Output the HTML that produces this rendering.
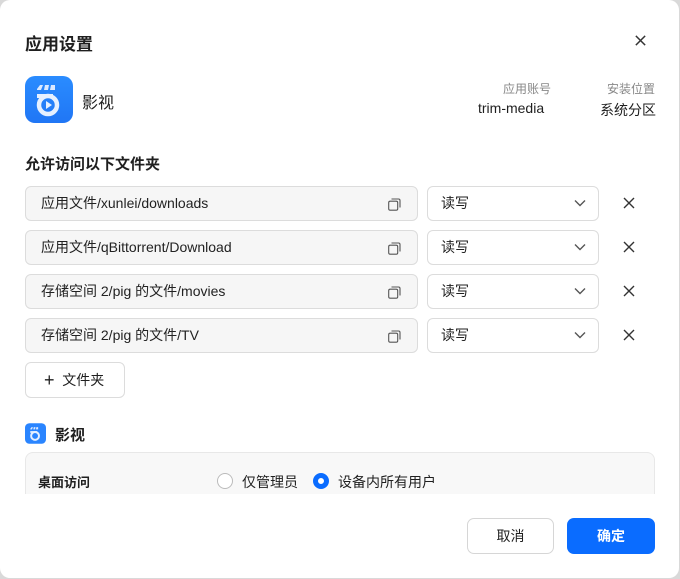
<!DOCTYPE html>
<html><head><meta charset="utf-8"><style>
*{box-sizing:border-box;margin:0;padding:0}
body{width:680px;height:579px;background:#d9d9d9;font-family:"Liberation Sans","Noto Sans CJK SC",sans-serif;color:#1f1f1f;position:relative;overflow:hidden}
.dlg{position:absolute;left:0;top:0;width:679px;height:578px;background:#fff;border-radius:10px}
.a{position:absolute}
.inp{position:absolute;left:25px;width:393px;height:35px;border:1px solid #dcdcdc;background:#f6f6f6;border-radius:6px;font-size:14px;padding-left:15px;line-height:33px;color:#222}
.sel{position:absolute;left:427px;width:172px;height:35px;border:1px solid #dcdcdc;background:#fff;border-radius:6px;font-size:14px;padding-left:13px;line-height:33px}
.cp{position:absolute;right:16px;top:11px}
.chev{position:absolute;right:12px;top:12px}
.x{position:absolute;left:623px}
</style></head><body><div class="dlg">
<div class="a" style="left:25px;top:30px;font-size:17px;font-weight:bold">应用设置</div>
<svg class="a" style="left:634px;top:34px" width="13" height="13" viewBox="0 0 14 14"><path d="M2 2L12 12M12 2L2 12" stroke="#333" stroke-width="1.6"/></svg>
<svg class="a" style="left:25px;top:76px" width="48" height="47" viewBox="0 0 48 47"><defs><linearGradient id="g" x1="0" y1="0" x2="0" y2="1"><stop offset="0" stop-color="#2a8cff"/><stop offset="1" stop-color="#2076f5"/></linearGradient></defs><rect width="48" height="47" rx="10" fill="url(#g)"/><path d="M12 13l3-4h3l-2 5h-4zM20 9h4l-1 5h-4zM26 9h4v5h-5z" fill="#dbe9ff"/><circle cx="23" cy="29" r="9" fill="none" stroke="#e6f0ff" stroke-width="4.5"/><path d="M12 18h16v4H12z" fill="#e6f0ff"/><path d="M21 25v8l6-4z" fill="#e6f0ff"/></svg>
<div class="a" style="left:82px;top:89px;font-size:16px">影视</div>
<div class="a" style="left:503px;top:80px;font-size:12px;color:#888">应用账号</div>
<div class="a" style="left:478px;top:100px;font-size:14px">trim-media</div>
<div class="a" style="left:607px;top:80px;font-size:12px;color:#888">安装位置</div>
<div class="a" style="left:600px;top:100px;font-size:14px">系统分区</div>
<div class="a" style="left:25px;top:153px;font-size:15px;font-weight:bold">允许访问以下文件夹</div>

<div class="inp" style="top:186px">应用文件/xunlei/downloads<svg class="cp" width="13" height="13" viewBox="0 0 13 13"><rect x="0.7" y="3.2" width="9" height="9" rx="1.5" fill="none" stroke="#555" stroke-width="1.1"/><path d="M3.5 1h7a1.5 1.5 0 0 1 1.5 1.5v7" fill="none" stroke="#555" stroke-width="1.1"/></svg></div>
<div class="sel" style="top:186px">读写<svg class="chev" width="12" height="8" viewBox="0 0 12 8"><path d="M1 1.5l5 5 5-5" fill="none" stroke="#555" stroke-width="1.4"/></svg></div>
<svg class="x" style="top:197px" width="12" height="12" viewBox="0 0 12 12"><path d="M1 1L11 11M11 1L1 11" stroke="#333" stroke-width="1.4"/></svg>

<div class="inp" style="top:230px">应用文件/qBittorrent/Download<svg class="cp" width="13" height="13" viewBox="0 0 13 13"><rect x="0.7" y="3.2" width="9" height="9" rx="1.5" fill="none" stroke="#555" stroke-width="1.1"/><path d="M3.5 1h7a1.5 1.5 0 0 1 1.5 1.5v7" fill="none" stroke="#555" stroke-width="1.1"/></svg></div>
<div class="sel" style="top:230px">读写<svg class="chev" width="12" height="8" viewBox="0 0 12 8"><path d="M1 1.5l5 5 5-5" fill="none" stroke="#555" stroke-width="1.4"/></svg></div>
<svg class="x" style="top:241px" width="12" height="12" viewBox="0 0 12 12"><path d="M1 1L11 11M11 1L1 11" stroke="#333" stroke-width="1.4"/></svg>

<div class="inp" style="top:274px">存储空间 2/pig 的文件/movies<svg class="cp" width="13" height="13" viewBox="0 0 13 13"><rect x="0.7" y="3.2" width="9" height="9" rx="1.5" fill="none" stroke="#555" stroke-width="1.1"/><path d="M3.5 1h7a1.5 1.5 0 0 1 1.5 1.5v7" fill="none" stroke="#555" stroke-width="1.1"/></svg></div>
<div class="sel" style="top:274px">读写<svg class="chev" width="12" height="8" viewBox="0 0 12 8"><path d="M1 1.5l5 5 5-5" fill="none" stroke="#555" stroke-width="1.4"/></svg></div>
<svg class="x" style="top:285px" width="12" height="12" viewBox="0 0 12 12"><path d="M1 1L11 11M11 1L1 11" stroke="#333" stroke-width="1.4"/></svg>

<div class="inp" style="top:318px">存储空间 2/pig 的文件/TV<svg class="cp" width="13" height="13" viewBox="0 0 13 13"><rect x="0.7" y="3.2" width="9" height="9" rx="1.5" fill="none" stroke="#555" stroke-width="1.1"/><path d="M3.5 1h7a1.5 1.5 0 0 1 1.5 1.5v7" fill="none" stroke="#555" stroke-width="1.1"/></svg></div>
<div class="sel" style="top:318px">读写<svg class="chev" width="12" height="8" viewBox="0 0 12 8"><path d="M1 1.5l5 5 5-5" fill="none" stroke="#555" stroke-width="1.4"/></svg></div>
<svg class="x" style="top:329px" width="12" height="12" viewBox="0 0 12 12"><path d="M1 1L11 11M11 1L1 11" stroke="#333" stroke-width="1.4"/></svg>

<div class="a" style="left:25px;top:362px;width:100px;height:36px;border:1px solid #dcdcdc;border-radius:6px;font-size:14px;line-height:34px;padding-left:18px"><span style="font-size:18px;vertical-align:-1px">+</span>&nbsp;&nbsp;文件夹</div>

<svg class="a" style="left:25px;top:423px" width="21" height="21" viewBox="0 0 48 47"><rect width="48" height="47" rx="10" fill="#2a85ff"/><path d="M12 13l3-4h3l-2 5h-4zM20 9h4l-1 5h-4zM26 9h4v5h-5z" fill="#dbe9ff"/><circle cx="23" cy="29" r="9" fill="none" stroke="#e6f0ff" stroke-width="4.5"/><path d="M12 18h16v4H12z" fill="#e6f0ff"/></svg>
<div class="a" style="left:55px;top:424px;font-size:15px;font-weight:bold">影视</div>

<div class="a" style="left:25px;top:452px;width:630px;height:42px;background:#f8f8f8;border:1px solid #e8e8e8;border-bottom:none;border-radius:8px 8px 0 0"></div>
<div class="a" style="left:38px;top:472px;font-size:13px;font-weight:bold">桌面访问</div>
<div class="a" style="left:217px;top:473px;width:16px;height:16px;border:1px solid #bbb;border-radius:50%;background:#fff"></div>
<div class="a" style="left:242px;top:472px;font-size:14px">仅管理员</div>
<div class="a" style="left:313px;top:473px;width:16px;height:16px;border:5px solid #0a6cff;border-radius:50%;background:#fff"></div>
<div class="a" style="left:338px;top:472px;font-size:14px">设备内所有用户</div>

<div class="a" style="left:467px;top:518px;width:87px;height:36px;border:1px solid #d6d6d6;border-radius:7px;font-size:14px;text-align:center;line-height:34px">取消</div>
<div class="a" style="left:567px;top:518px;width:88px;height:36px;background:#0a6cff;border-radius:7px;font-size:14px;text-align:center;line-height:36px;color:#fff;font-weight:bold">确定</div>
</div></body></html>
